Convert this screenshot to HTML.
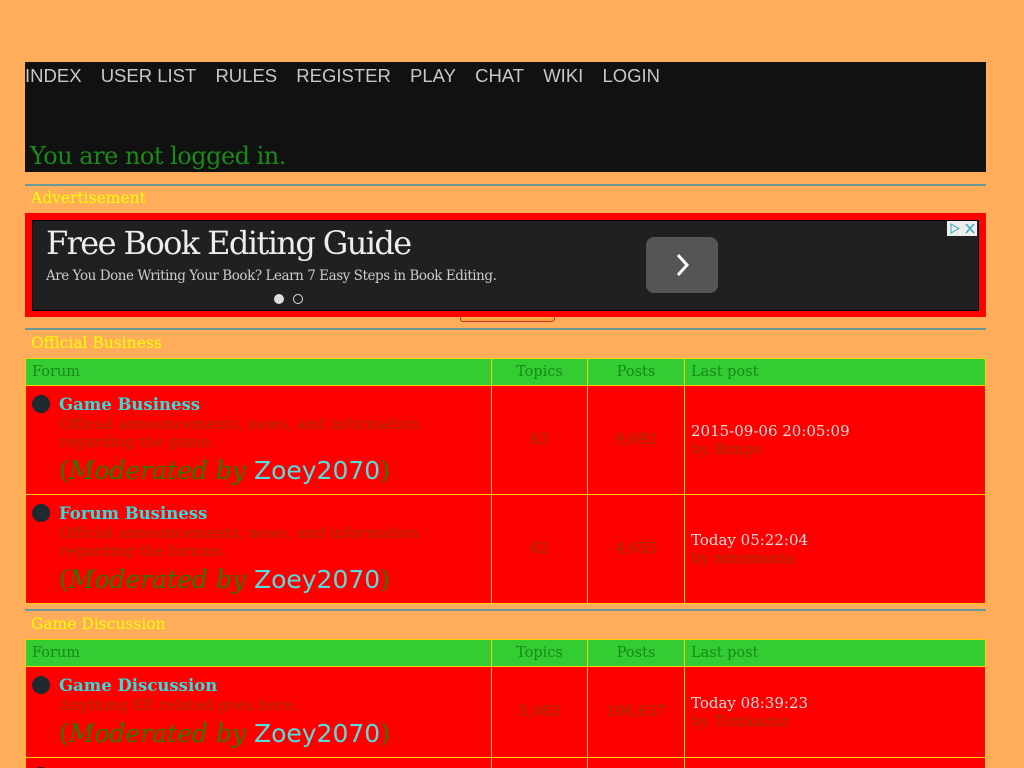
<!DOCTYPE html>
<html><head><meta charset="utf-8"><style>
html,body{margin:0;overflow:hidden;height:768px}
body{background:#ffad5b;font-family:"DejaVu Serif","Liberation Serif",serif;width:1024px;position:relative}
.a{position:absolute}
#nav{left:25px;top:62px;width:961px;height:110px;background:#111}
#nav .l{position:absolute;top:3px;left:0;font:18.5px "Liberation Sans",sans-serif;color:#c8c8c8;white-space:nowrap}
#nav .l span{margin-right:14px}
#nav .m{position:absolute;left:5px;top:80px;font:24px "DejaVu Serif",serif;color:#1a8a1a;letter-spacing:-0.5px}
.hr{left:25px;width:961px;height:0;border-top:2px solid #6a9a9a}
.cap{left:31px;color:#ffff00;font-size:15.5px}
table{position:absolute;left:25px;width:961px;border-collapse:collapse;font-size:14.5px}
td,th{border:1px solid #ffd000;padding:0 6px;font-weight:normal}
th{background:#33cc33;color:#178a17;height:26px;text-align:center}
td{background:#ff0000;color:#8a3a00;text-align:center}
.f{text-align:left;vertical-align:top;position:relative;padding-left:33px}
.dot{position:absolute;left:6px;top:9px;width:18px;height:18px;border-radius:50%;background:#1f2a30}
.t{color:#33dddd;font-weight:bold;font-size:16.5px;display:block;margin-top:9px;line-height:20px}
.d{color:#993300;line-height:18px;display:block;font-size:15px;letter-spacing:0px}
.mod{font-size:25px;color:#2a7a00;display:block;margin-top:3px;line-height:34px;font-family:"DejaVu Serif",serif}
.mod em{font-style:italic}
.mod i{font-style:normal;color:#55dddd;font-family:"DejaVu Sans",sans-serif}
.lp{text-align:left;color:#993300;line-height:18px;font-size:15px}
.lp span{color:#dddddd}
</style></head><body>
<div id="nav" class="a"><div class="l"><span>INDEX</span> <span>USER LIST</span> <span>RULES</span> <span>REGISTER</span> <span>PLAY</span> <span>CHAT</span> <span>WIKI</span> <span>LOGIN</span></div><div class="m">You are not logged in.</div></div>
<div class="a hr" style="top:184px"></div>
<div class="a cap" style="top:189px">Advertisement</div>
<div class="a" style="left:460px;top:300px;width:93px;height:20px;background:linear-gradient(#ffe8a0,#ffa030);border:1px solid #c33;border-radius:3px"></div>
<div class="a" style="left:25px;top:213px;width:961px;height:104px;background:#f00"></div>
<div class="a" style="left:32px;top:220px;width:945px;height:89px;background:#202020;border:1px solid #000">
<div class="a" style="left:13px;top:3px;font-size:32px;color:#eee;font-family:'DejaVu Serif',serif;letter-spacing:-1.6px">Free Book Editing Guide</div>
<div class="a" style="left:13px;top:47px;font-size:13.5px;color:#ccc;font-family:'DejaVu Serif',serif;letter-spacing:-0.45px">Are You Done Writing Your Book? Learn 7 Easy Steps in Book Editing.</div>
<div class="a" style="left:241px;top:73px;width:10px;height:10px;border-radius:50%;background:#ddd"></div>
<div class="a" style="left:260px;top:73px;width:8px;height:8px;border-radius:50%;border:1px solid #ddd"></div>
<div class="a" style="left:613px;top:16px;width:72px;height:56px;border-radius:8px;background:#555"><svg width="72" height="56"><path d="M32 18 L41 28 L32 38" stroke="#fff" stroke-width="3" fill="none"/></svg></div>
<div class="a" style="left:914px;top:0;width:30px;height:15px;background:#eee"><svg width="30" height="15"><path d="M4 3 L12 7.5 L4 12Z" stroke="#3ab" fill="none"/><path d="M19 3 L27 12 M27 3 L19 12" stroke="#3ab" stroke-width="1.5"/></svg></div>
</div>
<div class="a hr" style="top:328px"></div>
<div class="a cap" style="top:334px">Official Business</div>
<table style="top:358px;border:1px solid #e05000">
<tr><th style="text-align:left;width:453px">Forum</th><th style="width:83px">Topics</th><th style="width:84px">Posts</th><th style="text-align:left">Last post</th></tr>
<tr style="height:109px"><td class="f"><div class="dot"></div><span class="t">Game Business</span><span class="d">Official announcements, news, and information regarding the game.</span><span class="mod">(<em>Moderated by</em> <i>Zoey2070</i>)</span></td><td>63</td><td>9,692</td><td class="lp"><span>2015-09-06 20:05:09</span><br>by Bimps</td></tr>
<tr style="height:109px"><td class="f"><div class="dot"></div><span class="t">Forum Business</span><span class="d">Official announcements, news, and information regarding the forums.</span><span class="mod">(<em>Moderated by</em> <i>Zoey2070</i>)</span></td><td>62</td><td>4,655</td><td class="lp"><span>Today 05:22:04</span><br>by nimimania</td></tr>
</table>
<div class="a hr" style="top:609px"></div>
<div class="a cap" style="top:615px">Game Discussion</div>
<table style="top:639px;border:1px solid #e05000">
<tr><th style="text-align:left;width:453px">Forum</th><th style="width:83px">Topics</th><th style="width:84px">Posts</th><th style="text-align:left">Last post</th></tr>
<tr style="height:91px"><td class="f"><div class="dot"></div><span class="t">Game Discussion</span><span class="d">Anything EE related goes here.</span><span class="mod">(<em>Moderated by</em> <i>Zoey2070</i>)</span></td><td>5,083</td><td>106,637</td><td class="lp"><span>Today 08:39:23</span><br>by Tomkazaz</td></tr>
<tr style="height:40px"><td class="f"><div class="dot"></div></td><td></td><td></td><td></td></tr>
</table>
</body></html>
